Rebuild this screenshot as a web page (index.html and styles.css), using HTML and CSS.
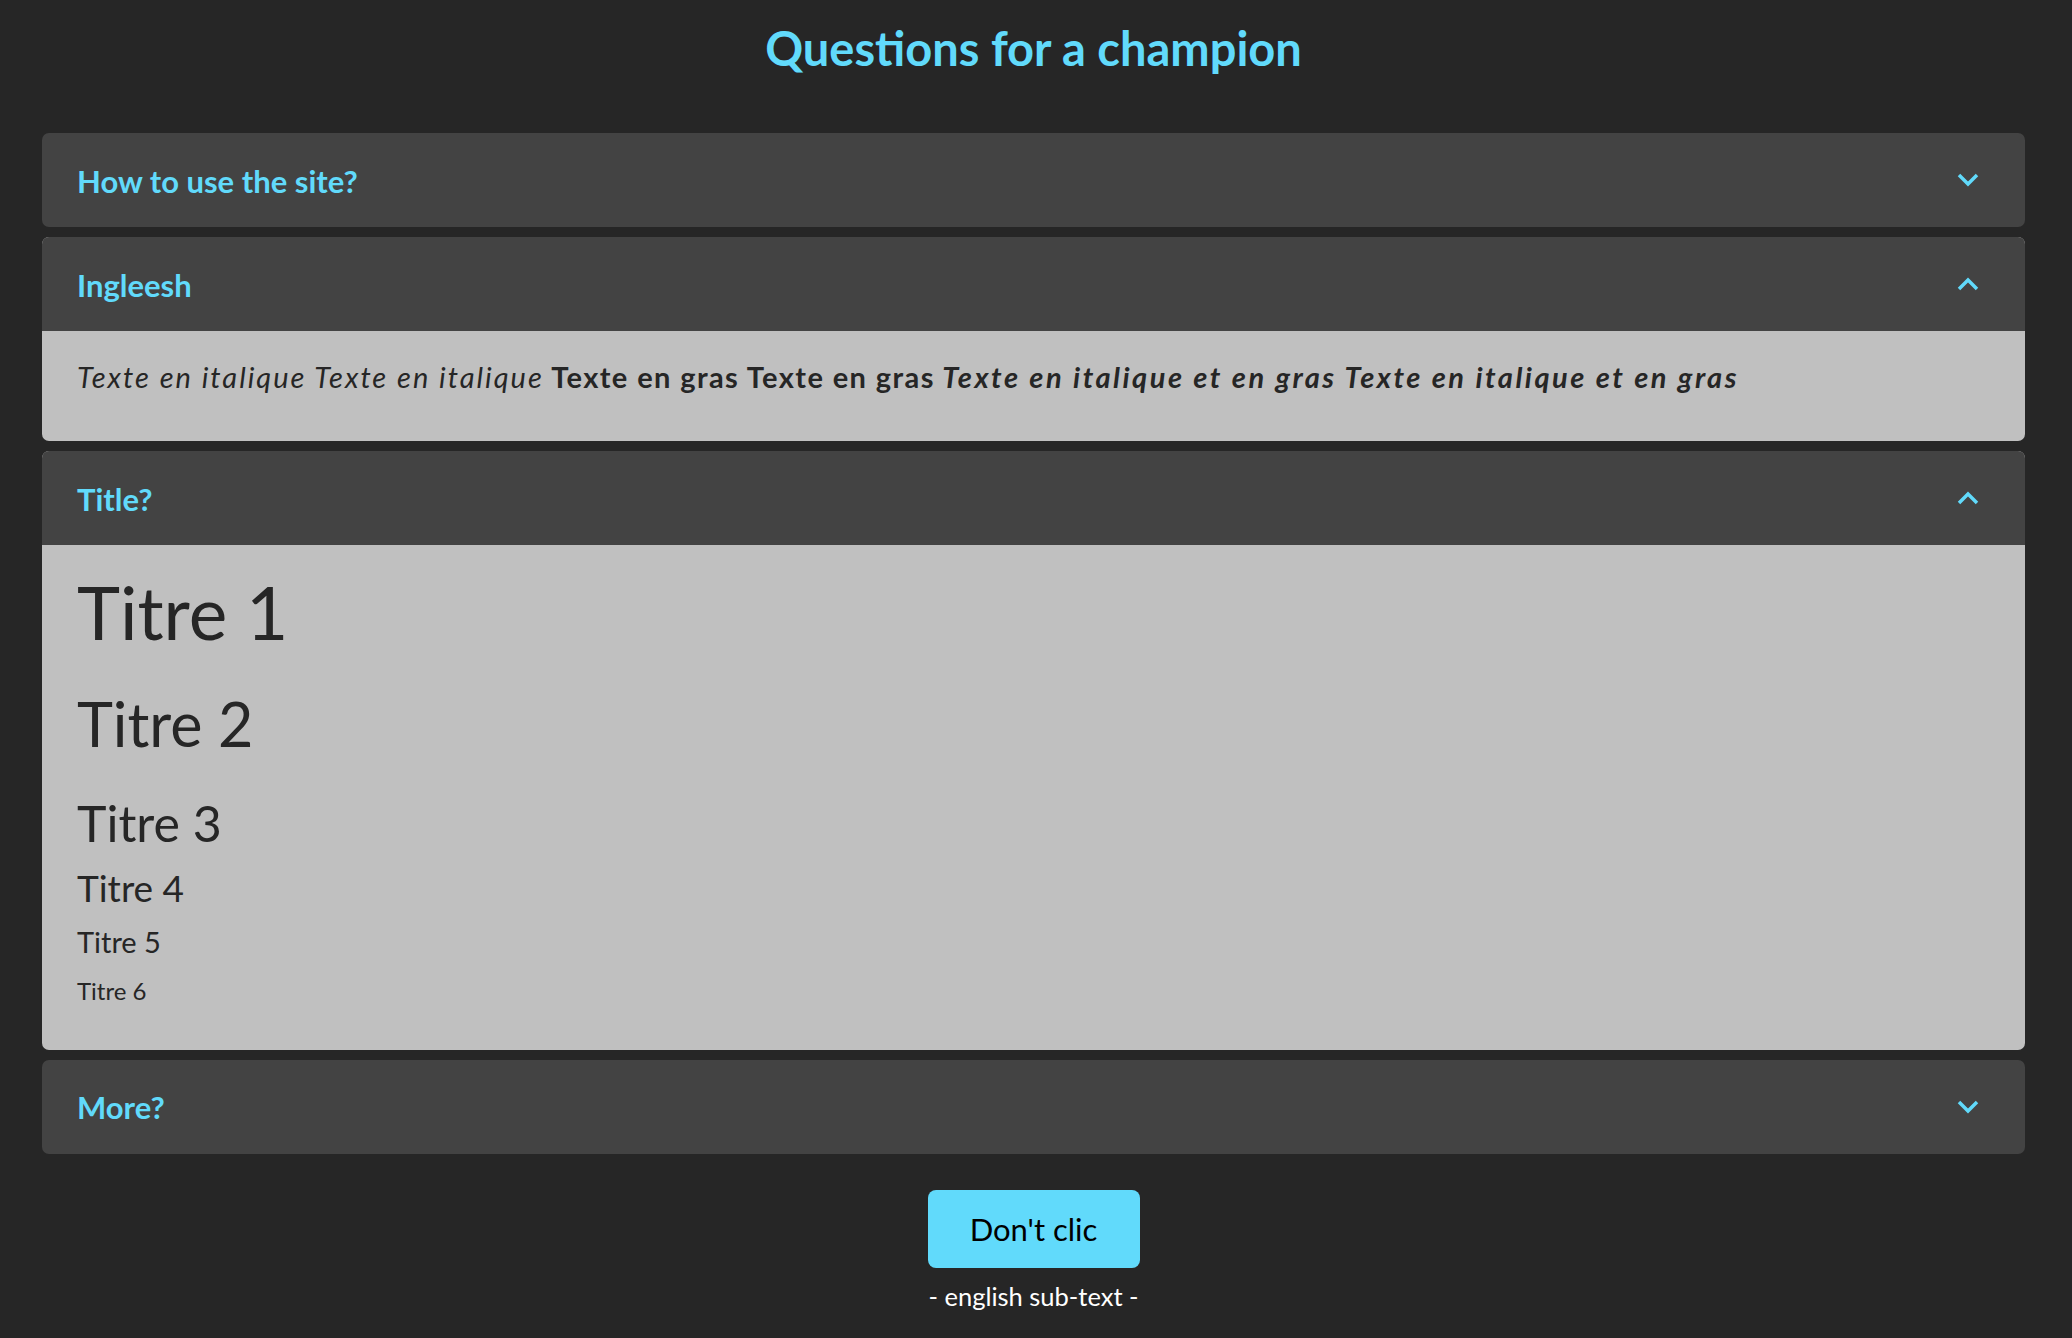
FILE: index.html
```html
<!DOCTYPE html>
<html lang="en">
<head>
    <meta charset="UTF-8">
    <meta name="viewport" content="width=device-width, initial-scale=1">
    <title>Questions for a champion</title>
    <link rel="stylesheet" href="styles.css">
</head>
<body>
    <main class="page">
        <h1 class="page-title">Questions for a champion</h1>

        <div class="faq">
            <details class="faq-item">
                <summary class="faq-head">
                    <span>How to use the site?</span>
                    <svg class="chevron" viewBox="0 0 22 14" width="22" height="14"><path d="M2 2 L11 11 L20 2" fill="none" stroke="currentColor" stroke-width="3.5"/></svg>
                </summary>
            </details>

            <details class="faq-item" open>
                <summary class="faq-head">
                    <span>Ingleesh</span>
                    <svg class="chevron" viewBox="0 0 22 14" width="22" height="14"><path d="M2 2 L11 11 L20 2" fill="none" stroke="currentColor" stroke-width="3.5"/></svg>
                </summary>
                <div class="faq-body">
                    <p class="faq-text"><em>Texte en italique Texte en italique</em> <strong>Texte en gras Texte en gras</strong> <strong><em>Texte en italique et en gras Texte en italique et en gras</em></strong></p>
                </div>
            </details>

            <details class="faq-item" open>
                <summary class="faq-head">
                    <span>Title?</span>
                    <svg class="chevron" viewBox="0 0 22 14" width="22" height="14"><path d="M2 2 L11 11 L20 2" fill="none" stroke="currentColor" stroke-width="3.5"/></svg>
                </summary>
                <div class="faq-body titles">
                    <h1>Titre 1</h1>
                    <h2>Titre 2</h2>
                    <h3>Titre 3</h3>
                    <h4>Titre 4</h4>
                    <h5>Titre 5</h5>
                    <h6>Titre 6</h6>
                </div>
            </details>

            <details class="faq-item">
                <summary class="faq-head">
                    <span>More?</span>
                    <svg class="chevron" viewBox="0 0 22 14" width="22" height="14"><path d="M2 2 L11 11 L20 2" fill="none" stroke="currentColor" stroke-width="3.5"/></svg>
                </summary>
            </details>
        </div>

        <div class="footer">
            <button class="btn">Don't clic</button>
            <p class="sub-text">- english sub-text -</p>
        </div>
    </main>
</body>
</html>
```

FILE: styles.css
```css
body {
    margin: 0;
    background-color: #262626;
    font-family: 'Lato', 'Liberation Sans', sans-serif;
    color: #262626;
}

.page {
    margin: 0 47px 0 42px;
    padding-top: 20px;
}

.page-title {
    margin: 0 0 57px;
    text-align: center;
    color: #61dafb;
    font-size: 47px;
    line-height: 1.2;
    font-weight: 700;
}

.faq {
    display: flex;
    flex-direction: column;
    gap: 10px;
}

.faq-item {
    border-radius: 7px;
    overflow: hidden;
    background-color: #c0c0c0;
}

.faq-head {
    box-sizing: border-box;
    display: flex;
    align-items: center;
    justify-content: space-between;
    height: 94px;
    padding: 2px 46px 0 35px;
    background-color: #434343;
    color: #61dafb;
    font-size: 31px;
    line-height: 1.2;
    font-weight: 700;
    list-style: none;
    cursor: pointer;
}

.faq-head::-webkit-details-marker {
    display: none;
}

.chevron {
    display: block;
    margin-top: -2px;
}

.faq-item[open] .chevron {
    transform: rotate(180deg);
}

.faq-body {
    padding: 29px 35px 46px;
}

.faq-text {
    margin: 0;
    font-size: 29px;
    line-height: 1.2;
}

.faq-text em {
    letter-spacing: 2px;
}

.faq-text strong {
    letter-spacing: 1.4px;
}

.faq-text strong em {
    letter-spacing: 2.5px;
}

.titles {
    padding-top: 24px;
    padding-bottom: 44px;
}

.titles h1,
.titles h2,
.titles h3,
.titles h4,
.titles h5,
.titles h6 {
    margin: 0;
    font-weight: 400;
    line-height: 1.2;
}

.titles h1 { font-size: 73px; }
.titles h2 { font-size: 61px; margin-top: 30px; }
.titles h3 { font-size: 50px; margin-top: 33px; }
.titles h4 { font-size: 37px; margin-top: 13px; }
.titles h5 { font-size: 29px; margin-top: 15px; }
.titles h6 { font-size: 24px; margin-top: 17px; }

.footer {
    display: flex;
    flex-direction: column;
    align-items: center;
    padding-top: 36px;
}

.btn {
    width: 212px;
    height: 78px;
    border: none;
    border-radius: 8px;
    background-color: #61dafb;
    color: #000;
    font-family: inherit;
    font-size: 31px;
    cursor: pointer;
}

.sub-text {
    margin: 13px 0 0;
    color: #fff;
    font-size: 25.5px;
    line-height: 1.2;
}
```
